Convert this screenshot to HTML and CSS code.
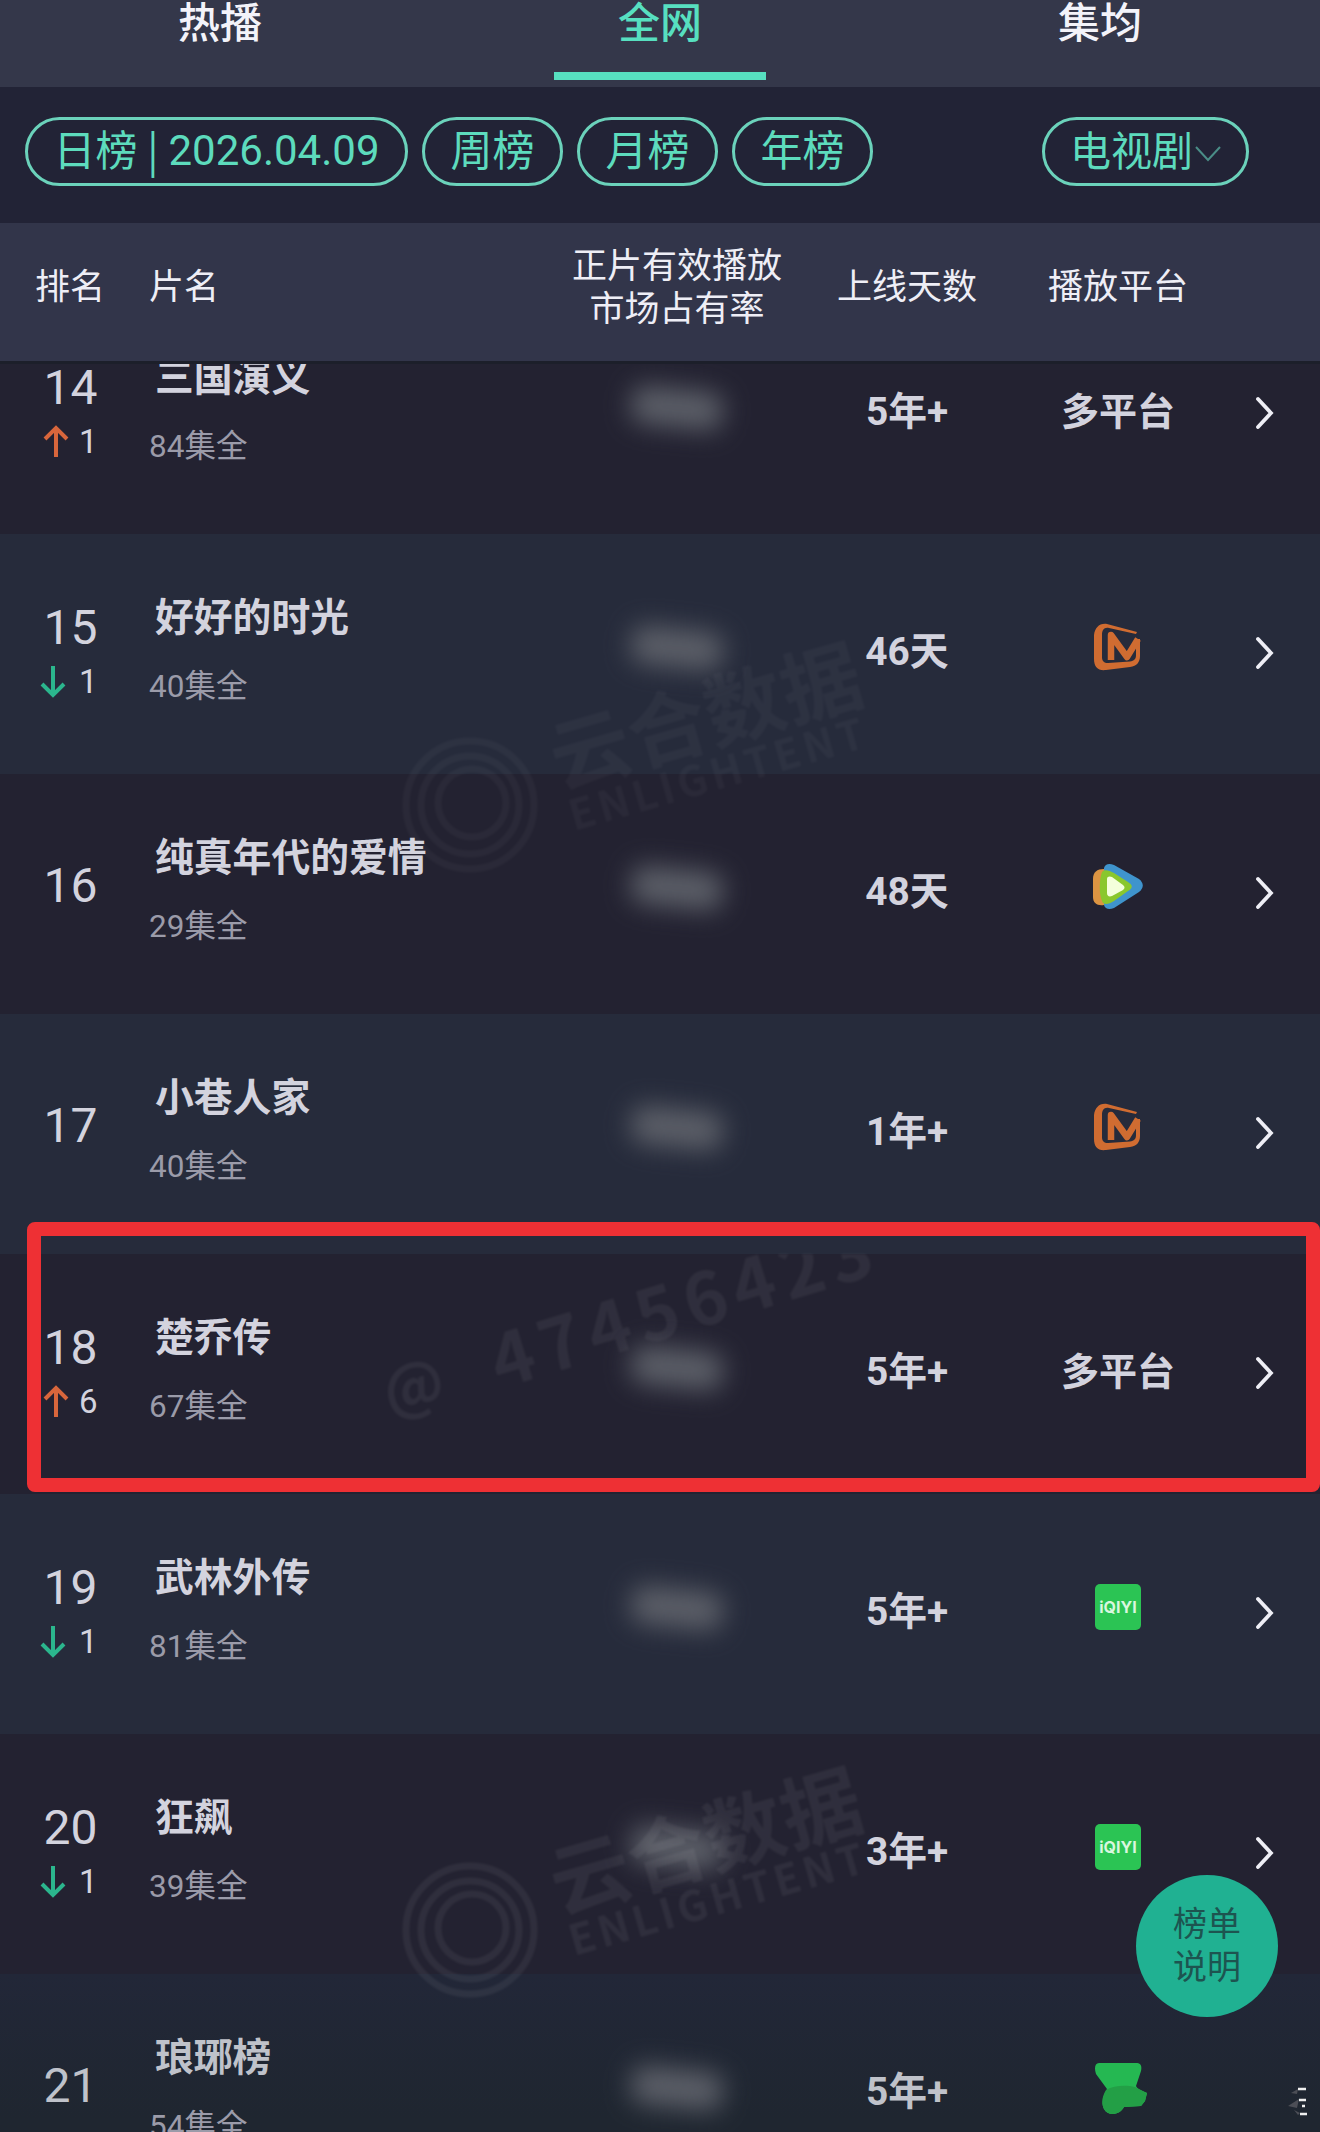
FILE: index.html
```html
<!DOCTYPE html>
<html lang="zh-CN">
<head>
    <meta charset="UTF-8">
    <meta name="viewport" content="width=device-width, initial-scale=1.0">
    <title>全网榜</title>
    <link rel="stylesheet" href="styles.css">
</head>
<body>
    <!-- shared icons -->
    <svg class="defs">
        <symbol id="up" viewBox="0 0 26 34">
            <path d="M13 32V3M2 14L13 3l11 11" fill="none" stroke="#d8663c" stroke-width="4"/>
        </symbol>
        <symbol id="down" viewBox="0 0 26 34">
            <path d="M13 1v29M2 19l11 11 11-11" fill="none" stroke="#2bb68d" stroke-width="4"/>
        </symbol>
        <symbol id="next" viewBox="0 0 20 34">
            <path d="M3 3l13 14L3 31" fill="none" stroke="#eeeef5" stroke-width="3.8" stroke-linecap="round"/>
        </symbol>
        <symbol id="mango" viewBox="0 0 48 48">
            <path d="M43 9L13 1C5 0 1 5 0 12v24c0 8 4 12 12 11l24-3c7-1 10-5 10-11V16h-4v16c0 4-2 6-6 6.500L14 40c-4 0-6-2-6-6V12c0-5 2-8 7-7l27 6z" fill="#d06c31"/>
            <path d="M17 37V12l16 22 11-18" fill="none" stroke="#d06c31" stroke-width="6.500" stroke-linejoin="round"/>
        </symbol>
        <symbol id="tencent" viewBox="0 0 50 46">
            <path d="M11 5C4 5 0 8 0 15v18c0 6 4 9 11 8z" fill="#dc9442"/>
            <path d="M11 4c1-4 5-5 10-3l25 14c5 4 5 9 0 13L21 44c-5 2-9 1-10-3z" fill="#3f94cd"/>
            <path d="M9 8c2-3 7-2 12 1l14 9c5 3 5 6 0 9L21 37c-6 4-11 4-12 0C6 31 6 16 9 8z" fill="#8ac72d"/>
            <path d="M14 15c0-3 3-3 5-2l11 8c2 2 2 3 0 5l-11 6c-3 1-5 0-5-3z" fill="#f4ffdb"/>
        </symbol>
    </svg>

    <nav class="tabs">
        <div class="tab">热播</div>
        <div class="tab active">全网</div>
        <div class="tab">集均</div>
    </nav>

    <div class="filters">
        <div class="pill date"><span>日榜</span><span class="bar">|</span><span class="day">2026.04.09</span></div>
        <div class="pill">周榜</div>
        <div class="pill">月榜</div>
        <div class="pill">年榜</div>
        <div class="pill type">电视剧<svg viewBox="0 0 26 17"><path d="M1 2l12 13L25 2" fill="none" stroke="#4a8d87" stroke-width="2"/></svg></div>
    </div>

    <div class="cols head">
        <div class="center">排名</div>
        <div class="head-name">片名</div>
        <div class="center">正片有效播放<br>市场占有率</div>
        <div class="center">上线天数</div>
        <div class="center">播放平台</div>
    </div>

    <div class="list">
        <div class="cols row">
            <div class="rank">14<div class="move"><svg class="up"><use href="#up"/></svg><span>1</span></div></div>
            <div class="info"><div class="name">三国演义</div><div class="sub">84集全</div></div>
            <div class="share"></div>
            <div class="days">5年+</div>
            <div class="platform">多平台</div>
            <svg class="next"><use href="#next"/></svg>
        </div>
        <div class="cols row light">
            <div class="rank">15<div class="move"><svg><use href="#down"/></svg><span>1</span></div></div>
            <div class="info"><div class="name">好好的时光</div><div class="sub">40集全</div></div>
            <div class="share"></div>
            <div class="days">46天</div>
            <div class="platform"><svg class="mango"><use href="#mango"/></svg></div>
            <svg class="next"><use href="#next"/></svg>
        </div>
        <div class="cols row">
            <div class="rank same">16</div>
            <div class="info"><div class="name">纯真年代的爱情</div><div class="sub">29集全</div></div>
            <div class="share"></div>
            <div class="days">48天</div>
            <div class="platform"><svg class="tencent"><use href="#tencent"/></svg></div>
            <svg class="next"><use href="#next"/></svg>
        </div>
        <div class="cols row light">
            <div class="rank same">17</div>
            <div class="info"><div class="name">小巷人家</div><div class="sub">40集全</div></div>
            <div class="share"></div>
            <div class="days">1年+</div>
            <div class="platform"><svg class="mango"><use href="#mango"/></svg></div>
            <svg class="next"><use href="#next"/></svg>
        </div>
        <div class="cols row marked">
            <svg class="mark-id" viewBox="0 0 560 240">
                <text x="29" y="160" font-size="60" transform="rotate(-13 29 160)">@</text>
                <text x="140" y="135" transform="rotate(-17 140 135)" font-size="72" textLength="395">47456423</text>
            </svg>
            <div class="rank">18<div class="move"><svg class="up"><use href="#up"/></svg><span>6</span></div></div>
            <div class="info"><div class="name">楚乔传</div><div class="sub">67集全</div></div>
            <div class="share"></div>
            <div class="days">5年+</div>
            <div class="platform">多平台</div>
            <svg class="next"><use href="#next"/></svg>
            <div class="frame"></div>
        </div>
        <div class="cols row light">
            <div class="rank">19<div class="move"><svg><use href="#down"/></svg><span>1</span></div></div>
            <div class="info"><div class="name">武林外传</div><div class="sub">81集全</div></div>
            <div class="share"></div>
            <div class="days">5年+</div>
            <div class="platform"><span class="iqiyi">iQIYI</span></div>
            <svg class="next"><use href="#next"/></svg>
        </div>
        <div class="cols row">
            <div class="rank">20<div class="move"><svg><use href="#down"/></svg><span>1</span></div></div>
            <div class="info"><div class="name">狂飙</div><div class="sub">39集全</div></div>
            <div class="share"></div>
            <div class="days">3年+</div>
            <div class="platform"><span class="iqiyi">iQIYI</span></div>
            <svg class="next"><use href="#next"/></svg>
        </div>
        <div class="cols row last">
            <div class="rank same">21</div>
            <div class="info"><div class="name">琅琊榜</div><div class="sub">54集全</div></div>
            <div class="share"></div>
            <div class="days">5年+</div>
            <div class="platform"><svg class="blot" viewBox="0 0 52 52"><path d="M4 0h37c5 0 6 3 5 8l-5 15c1 3 6 5 11 7l-2 8-4 5-17 1c-4 8-16 10-20 2-3-6-1-12 3-20L1 11C-1 5 0 0 4 0z" fill="#25b852"/><path d="M11 27c8-5 21-5 29-3l12 6-2 8-4 5-17 1c-4 8-16 10-20 2-3-6-2-12 2-19z" fill="#239f46"/></svg></div>
        </div>

        <svg class="brand first" viewBox="0 0 500 270">
            <g class="rings">
                <circle cx="70" cy="187" r="64"/>
                <circle cx="70" cy="187" r="49"/>
                <circle cx="72" cy="185" r="34"/>
            </g>
            <text x="160" y="171" font-size="80" transform="rotate(-16 160 171)">云合数据</text>
            <text x="174" y="213" font-size="42" transform="rotate(-16 174 213)" textLength="305">ENLIGHTENT</text>
        </svg>
        <svg class="brand second" viewBox="0 0 500 270">
            <g class="rings">
                <circle cx="70" cy="187" r="64"/>
                <circle cx="70" cy="187" r="49"/>
                <circle cx="72" cy="185" r="34"/>
            </g>
            <text x="160" y="171" font-size="80" transform="rotate(-16 160 171)">云合数据</text>
            <text x="174" y="213" font-size="42" transform="rotate(-16 174 213)" textLength="305">ENLIGHTENT</text>
        </svg>
    </div>

    <div class="help">榜单<br>说明</div>
    <svg class="edge" viewBox="0 0 60 40">
        <path d="M46 7l-7 4 6 1zM47 17l-11 7 9 2zM48 31l-6-3 4 5z" fill="#4c4e56"/>
        <path d="M46 7h8M47 18h7M50 24h3M48 32h7" stroke="#eee" stroke-width="2.500"/>
    </svg>
</body>
</html>
```

FILE: styles.css
```css
* {
    box-sizing: border-box;
}
body {
    margin: 0;
    width: 1320px;
    height: 2132px;
    overflow: hidden;
    position: relative;
    display: flex;
    flex-direction: column;
    font-family: "Noto Sans CJK SC", "Noto Sans", sans-serif;
    background-color: #232231;
    color: #d3d3de;
}
.defs {
    position: absolute;
    width: 0;
    height: 0;
}

/* top tabs */
.tabs {
    display: flex;
    height: 87px;
    flex: none;
    background-color: #34374a;
}
.tab {
    flex: 1;
    display: flex;
    flex-direction: column;
    align-items: center;
    justify-content: space-between;
    font-size: 42px;
    font-weight: 500;
    line-height: 40px;
    color: #f3f3fa;
}
.tab.active {
    color: #57dfc0;
}
.tab.active::after {
    content: "";
    width: 212px;
    height: 8px;
    margin-bottom: 7px;
    background-color: #57dfc0;
}

/* filters */
.filters {
    display: flex;
    align-items: center;
    gap: 14px;
    height: 136px;
    flex: none;
    padding: 0 71px 7px 25px;
    background-color: #222336;
}
.pill {
    display: flex;
    align-items: center;
    justify-content: center;
    width: 141px;
    height: 69px;
    padding-bottom: 7px;
    border: 3px solid #6bd2bb;
    border-radius: 35px;
    color: #5ddbbd;
    font-size: 42px;
    line-height: 60px;
    white-space: nowrap;
}
.pill.date {
    width: 383px;
}
.bar {
    width: 31px;
    text-align: center;
}
.day {
    margin-top: 6px;
    font-family: Roboto, sans-serif;
}
.pill.type {
    width: 207px;
    margin-left: auto;
    font-size: 41px;
}
.pill.type svg {
    width: 26px;
    height: 17px;
    margin: 11px 0 0 2px;
}

/* table */
.cols {
    display: grid;
    grid-template-columns: 148px 429px 200px 260px 162px 121px;
}
.head {
    height: 138px;
    flex: none;
    align-items: center;
    padding-bottom: 17px;
    background-color: #32354a;
    color: #eeeef6;
    font-size: 35px;
    line-height: 43px;
    white-space: nowrap;
}
.center {
    display: flex;
    justify-content: center;
    text-align: center;
}
.head .center:first-child {
    padding-right: 8px;
}
.head-name {
    padding-left: 1px;
}
.list {
    position: relative;
    flex: 1;
    min-height: 0;
    overflow: hidden;
    border-top: 3px solid #1c1f2a;
}
.row {
    position: relative;
    height: 240px;
    align-items: start;
    background-color: #232231;
}
.row:first-child {
    margin-top: -70px;
}
.row.light {
    background-color: #262b3b;
}
.row.last {
    background: linear-gradient(#222738, #1f2630 60%);
    color: #bfc2ca;
}
.rank {
    width: 141px;
    padding-top: 68px;
    text-align: center;
    font-family: Roboto, sans-serif;
    font-size: 48px;
    line-height: 52px;
}
.rank.same {
    padding-top: 86px;
}
.move {
    display: flex;
    align-items: center;
    padding-left: 40px;
    margin-top: 6px;
    height: 44px;
    font-size: 33px;
    line-height: 44px;
}
.move svg {
    width: 26px;
    height: 34px;
}
.move svg.up {
    margin: 0 -3px 0 3px;
}
.move span {
    margin-left: 13px;
}
.name {
    padding: 52px 0 0 7px;
    font-size: 38.800px;
    font-weight: 700;
    line-height: 56px;
}
.sub {
    margin-top: 22px;
    padding-left: 1px;
    font-family: Roboto, "Noto Sans CJK SC", sans-serif;
    font-size: 31.500px;
    line-height: 46px;
    color: #9b9ba9;
}
.share {
    justify-self: center;
    width: 92px;
    height: 38px;
    margin-top: 95px;
    border-radius: 14px;
    background-color: #5c5f68;
    transform: rotate(6deg);
    filter: blur(13px);
}
.days, .platform {
    display: flex;
    justify-content: center;
    align-items: center;
    height: 60px;
    margin-top: 84px;
    font-size: 38px;
    font-weight: 700;
    white-space: nowrap;
}
.days {
    font-family: Roboto, "Noto Sans CJK SC", sans-serif;
    font-size: 38.800px;
}
.platform svg, .iqiyi {
    margin-bottom: 2px;
}
.mango {
    width: 48px;
    height: 48px;
}
.tencent {
    width: 50px;
    height: 46px;
}
.iqiyi {
    width: 46px;
    height: 46px;
    border-radius: 5px;
    background-color: #2bc454;
    color: #d9f7df;
    font-family: Inter, sans-serif;
    font-size: 16px;
    line-height: 46px;
    text-align: center;
}
.platform .blot {
    width: 52px;
    height: 52px;
    margin: 2px 0 0 5px;
}
.next {
    width: 20px;
    height: 34px;
    margin: 102px 0 0 56px;
}
.frame {
    position: absolute;
    left: 27px;
    top: -32px;
    width: 1293px;
    height: 270px;
    border: 14px solid #ee3034;
    border-radius: 8px;
    z-index: 2;
}

/* watermarks */
.brand, .mark-id {
    position: absolute;
    fill: #fff;
    opacity: 0.055;
    font-weight: 700;
    filter: blur(1px);
}
.brand {
    left: 400px;
    width: 500px;
    height: 270px;
}
.brand.first {
    top: 254px;
    opacity: 0.03;
}
.brand.second {
    top: 1379px;
}
.rings {
    fill: none;
    stroke: #fff;
    stroke-width: 7;
}
.mark-id {
    left: 360px;
    top: 0;
    width: 560px;
    height: 240px;
    overflow: hidden;
}

.help {
    position: absolute;
    left: 1136px;
    top: 1875px;
    width: 142px;
    height: 142px;
    padding-top: 25px;
    border-radius: 50%;
    background-color: #20b192;
    color: #1d5450;
    font-size: 34px;
    line-height: 43px;
    text-align: center;
}
.edge {
    position: absolute;
    left: 1252px;
    top: 2082px;
    width: 60px;
    height: 40px;
}
```
